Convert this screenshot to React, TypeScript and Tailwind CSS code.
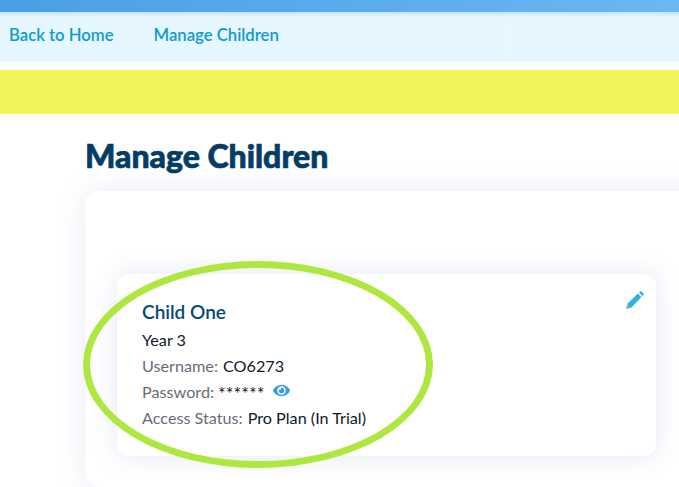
import { FaEye } from 'react-icons/fa';

function PencilIcon() {
  return (
    <svg width="18" height="18" viewBox="0 0 18 18" className="absolute right-[12px] top-[17px]">
      <path d="M0.3 17.7L1.6 12.4L11.9 2.6L15.4 6.1L5.6 16.4Z" fill="#2bb5d8" />
      <path d="M0.3 17.7L1.3 13.6L4.4 16.7Z" fill="#9aa7ad" />
      <path d="M13 1.6L14.2 0.4Q14.8 0 15.4 0.4L17.6 2.6Q18 3.2 17.6 3.8L16.4 5Z" fill="#2bb5d8" />
    </svg>
  );
}

function Row({ label, value }: { label: string; value: string }) {
  return (
    <div className="flex items-center h-[26px]">
      <span className="text-[#6b6b78]">{label}</span>
      <span className="ml-[5px] text-[#111827]">{value}</span>
    </div>
  );
}

export default function App() {
  return (
    <div className="relative w-[679px] h-[487px] overflow-hidden bg-white font-['Lato','Open_Sans',sans-serif]">
      <div className="h-[12px] bg-gradient-to-r from-[#4a9fe4] to-[#6bb8f2]" />
      <div className="h-[50px] bg-[#e6f7ff] bg-gradient-to-b from-[#c5e2f8] from-0% to-[#e6f7ff] to-10% flex items-center pl-[9px] pb-[3px] gap-[40px] text-[16.7px] font-semibold text-[#0d9bd1]">
        <a>Back to Home</a>
        <a>Manage Children</a>
      </div>
      <div className="h-[44px] mt-[8px] bg-[#f0f65a]" />

      <div className="pl-[85px]">
        <h1 className="mt-[24px] h-[36px] text-[32px] leading-[36px] font-black [-webkit-text-stroke:0.7px_#033d66] text-[#033d66]">Manage Children</h1>
        <div className="mt-[17px] w-[700px] h-[296px] rounded-[14px] bg-white shadow-[0_0_28px_rgba(90,110,190,0.14)] pt-[83px] pl-[32px]">
          <div className="relative w-[539px] h-[182px] rounded-[12px] bg-white shadow-[0_0_26px_rgba(90,110,190,0.16)] pl-[25px] pt-[26px] text-[16.2px]">
            <h2 className="text-[19px] leading-[24px] font-semibold text-[#04477a]">Child One</h2>
            <div className="flex flex-col mt-[3px]">
              <div className="flex items-center h-[26px] text-[#111827]">Year 3</div>
              <Row label="Username:" value="CO6273" />
              <div className="flex items-center h-[26px]">
                <span className="text-[#6b6b78]">Password:</span>
                <span className="ml-[4px] pt-[3px] text-[18.2px] leading-none text-[#111827]">******</span>
                <FaEye className="ml-[9px] mb-[3px] w-[17px] h-[17px] text-[#3b9ae1]" />
              </div>
              <Row label="Access Status:" value="Pro Plan (In Trial)" />
            </div>
            <PencilIcon />
          </div>
        </div>
      </div>

      {/* hand drawn highlight round the child details */}
      <div className="absolute left-[83px] top-[261px] w-[350px] h-[207px] rounded-[50%] border-[7px] border-[#aee73f]" />
    </div>
  );
}
